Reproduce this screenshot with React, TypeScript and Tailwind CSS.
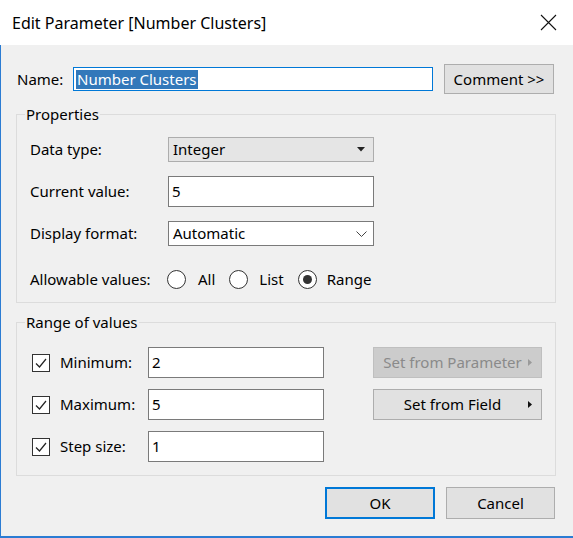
import React from "react";

function Check() {
  return (
    <span className="flex h-[18px] w-[18px] items-center justify-center border border-[#333333] bg-white">
      <svg width="14" height="14" viewBox="0 0 14 14" fill="none">
        <path d="M2 7.5L5.5 11L12 3" stroke="#222222" strokeWidth="1.2" />
      </svg>
    </span>
  );
}

function Radio({ on }: { on?: boolean }) {
  return (
    <span className="flex h-[19px] w-[19px] items-center justify-center rounded-full border border-[#333333] bg-white">
      {on && <span className="h-[9px] w-[9px] rounded-full bg-[#333333]" />}
    </span>
  );
}

function Arrow({ color }: { color: string }) {
  return (
    <svg width="4" height="7" viewBox="0 0 4 7" className="absolute right-[9px]">
      <path d="M0 0L4 3.5L0 7Z" fill={color} />
    </svg>
  );
}

export default function App() {
  return (
    <div className="flex h-[538px] w-[573px] flex-col bg-white font-['Noto_Sans',sans-serif] text-[15px] text-black">
      {/*title bar*/}
      <div className="flex h-[45px] items-center justify-between pl-[12px] pr-[16px]">
        <div className="text-[16px]">Edit Parameter [Number Clusters]</div>
        <svg width="17" height="17" viewBox="0 0 17 17" fill="none">
          <path d="M1 1L16 16M16 1L1 16" stroke="#111111" strokeWidth="1.1" />
        </svg>
      </div>

      {/*body*/}
      <div className="flex flex-1 flex-col border-b-2 border-l border-[#2b7cd3] bg-[#f0f0f0] pl-[15px] pr-[17px]">
        {/*name row*/}
        <div className="mt-[19px] flex h-[30px] items-center">
          <div className="w-[57px] pl-[1px]">Name:</div>
          <div className="flex h-[24px] w-[360px] items-center border border-[#0078d7] bg-white pl-[2px]">
            <span className="bg-[#3278ba] px-[1px] leading-[19px] text-white">Number Clusters</span>
          </div>
          <button className="ml-[11px] h-[30px] w-[110px] border border-[#adadad] bg-[#e1e1e1]">
            Comment &gt;&gt;
          </button>
        </div>

        {/*properties*/}
        <fieldset className="mt-[10px] border border-[#dcdcdc] pb-[13px] pl-[13px] pr-[13px] pt-[13px]">
          <legend className="-ml-[5px] px-[1px] leading-[20px]">Properties</legend>
          <div className="flex flex-col gap-[14px]">
            <div className="flex items-center">
              <div className="w-[138px]">Data type:</div>
              <div className="flex h-[25px] w-[206px] items-center justify-between border border-[#adadad] bg-[#e5e5e5] pl-[4px] pr-[8px]">
                <span>Integer</span>
                <svg width="8" height="5" viewBox="0 0 8 5">
                  <path d="M0 0H8L4 4.5Z" fill="#222222" />
                </svg>
              </div>
            </div>
            <div className="flex items-center">
              <div className="w-[138px]">Current value:</div>
              <div className="flex h-[31px] w-[206px] items-center border border-[#7a7a7a] bg-white pl-[3px]">5</div>
            </div>
            <div className="flex items-center">
              <div className="w-[138px]">Display format:</div>
              <div className="flex h-[25px] w-[206px] items-center justify-between border border-[#7a7a7a] bg-white pl-[4px] pr-[6px]">
                <span>Automatic</span>
                <svg width="11" height="6" viewBox="0 0 11 6" fill="none">
                  <path d="M0.5 0.5L5.5 5.5L10.5 0.5" stroke="#444444" strokeWidth="1" />
                </svg>
              </div>
            </div>
            <div className="mt-[9px] flex h-[20px] items-center">
              <div className="w-[137px]">Allowable values:</div>
              <Radio />
              <span className="ml-[12px]">All</span>
              <span className="ml-[14px]">
                <Radio />
              </span>
              <span className="ml-[11px]">List</span>
              <span className="ml-[14px]">
                <Radio on />
              </span>
              <span className="ml-[10px]">Range</span>
            </div>
          </div>
        </fieldset>

        {/*range of values*/}
        <fieldset className="mt-[9px] border border-[#dcdcdc] pb-[13px] pl-[15px] pr-[13px] pt-[15px]">
          <legend className="-ml-[7px] px-[1px] leading-[20px]">Range of values</legend>
          <div className="flex flex-col gap-[11px]">
            <div className="flex h-[31px] items-center">
              <Check />
              <span className="ml-[10px] w-[88px]">Minimum:</span>
              <div className="flex h-[31px] w-[176px] items-center border border-[#7a7a7a] bg-white pl-[3px]">2</div>
              <button className="relative ml-[49px] flex h-[31px] w-[169px] items-center justify-center border border-[#bfbfbf] bg-[#cccccc] pr-[10px] text-[#8a8a8a]">
                Set from Parameter
                <Arrow color="#9a9a9a" />
              </button>
            </div>
            <div className="flex h-[31px] items-center">
              <Check />
              <span className="ml-[10px] w-[88px]">Maximum:</span>
              <div className="flex h-[31px] w-[176px] items-center border border-[#7a7a7a] bg-white pl-[3px]">5</div>
              <button className="relative ml-[49px] flex h-[31px] w-[169px] items-center justify-center border border-[#adadad] bg-[#e1e1e1] pr-[10px]">
                Set from Field
                <Arrow color="#111111" />
              </button>
            </div>
            <div className="flex h-[31px] items-center">
              <Check />
              <span className="ml-[10px] w-[88px]">Step size:</span>
              <div className="flex h-[31px] w-[176px] items-center border border-[#7a7a7a] bg-white pl-[3px]">1</div>
            </div>
          </div>
        </fieldset>

        {/*buttons*/}
        <div className="mt-[11px] flex justify-end gap-[11px] pr-[1px]">
          <button className="h-[32px] w-[110px] border-2 border-[#0078d7] bg-[#e1e1e1]">OK</button>
          <button className="h-[32px] w-[109px] border border-[#adadad] bg-[#e1e1e1]">Cancel</button>
        </div>
      </div>
    </div>
  );
}
